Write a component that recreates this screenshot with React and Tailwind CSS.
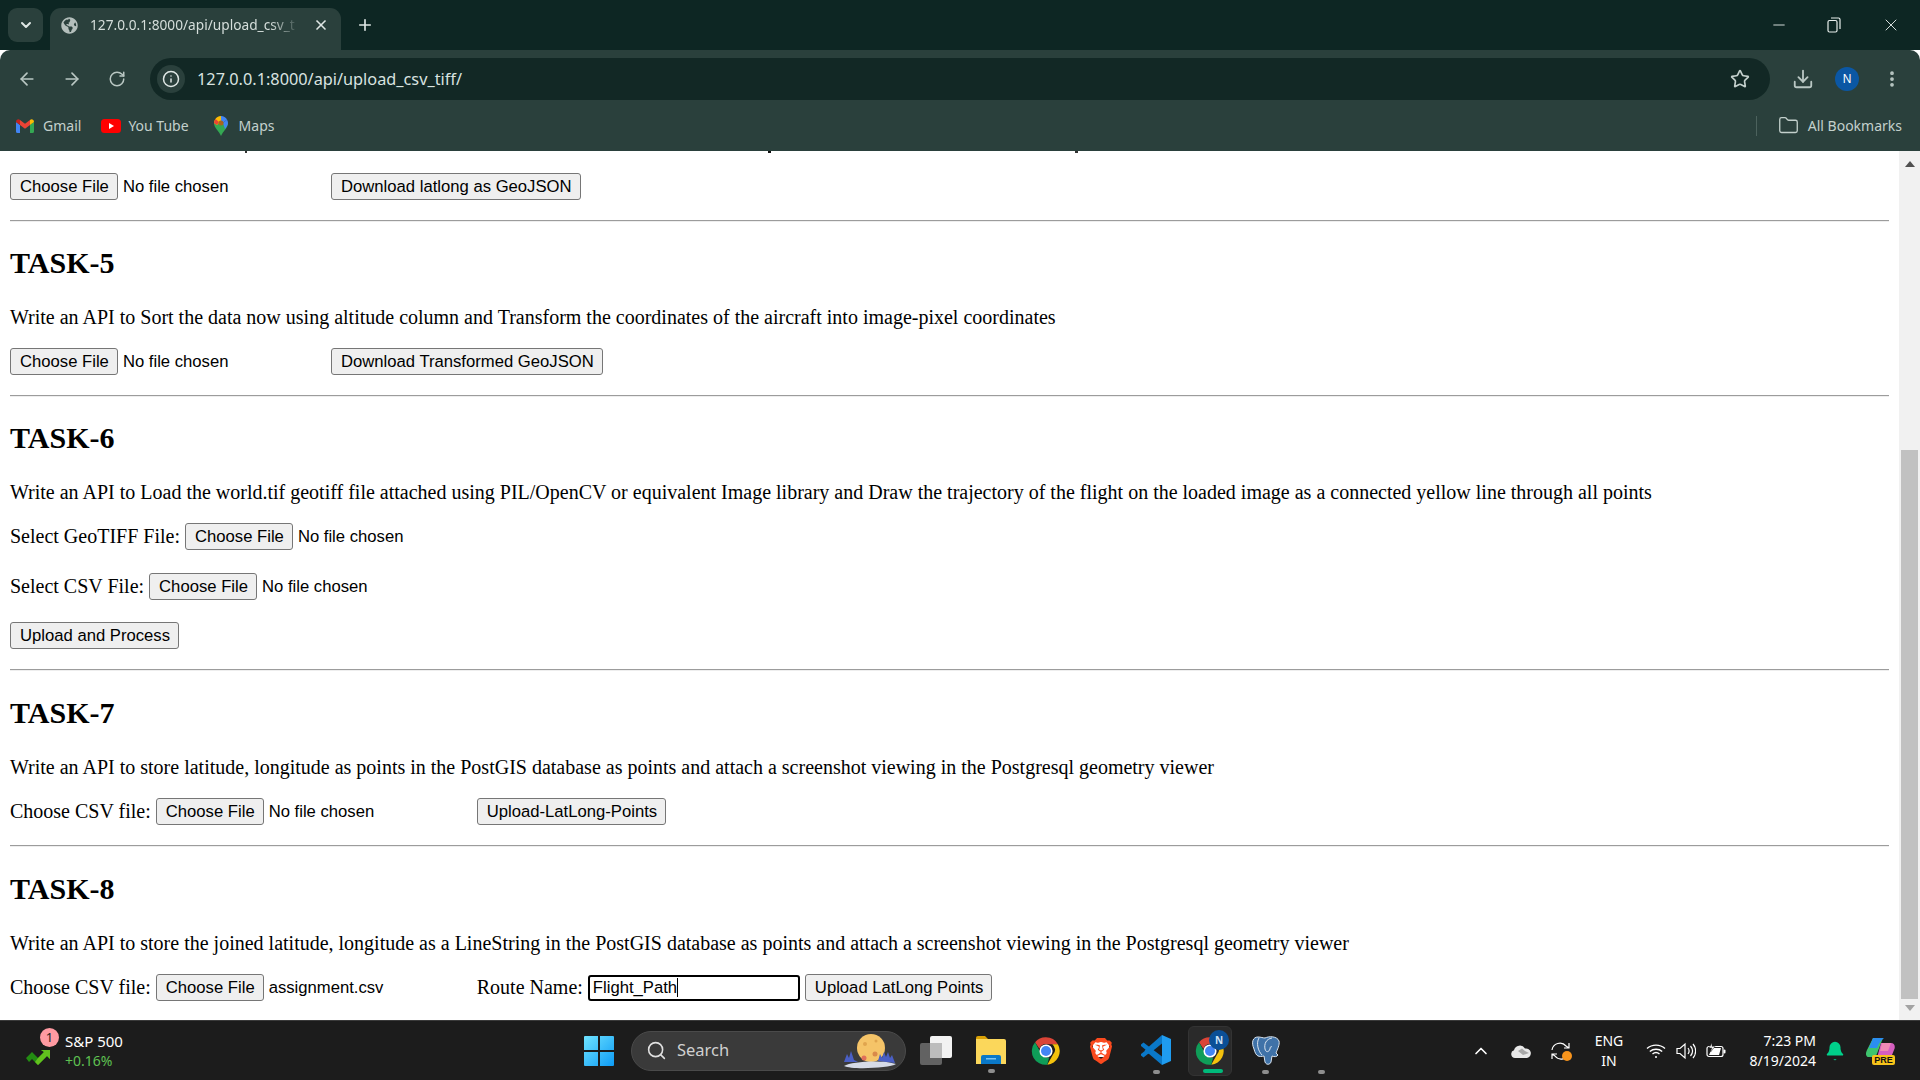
import React from 'react';
import { ArrowLeft, ArrowRight, RotateCw, Info, Star, Download, ChevronDown, ChevronUp, X, Plus, Minus, Folder, EllipsisVertical, Search, Bell } from 'lucide-react';
import { SiBrave } from 'react-icons/si';
import { FaGlobeAmericas } from 'react-icons/fa';

const uiFont = "font-['Noto_Sans','Open_Sans',sans-serif]";

const ChromeIcon = ({ size = 30 }) => (
  <svg width={size} height={size} viewBox="0 0 48 48">
    <path d="M24 2a22 22 0 0 1 19 11H24a11 11 0 0 0-10.5 7.5L6.500 10A22 22 0 0 1 24 2z" fill="#db4437" />
    <path d="M43 13a22 22 0 0 1-17 33l9-16a11 11 0 0 0-1-17z" fill="#f4c20d" />
    <path d="M6.500 10l9.500 18a11 11 0 0 0 13 6.500L26 46A22 22 0 0 1 6.500 10z" fill="#0f9d58" />
    <circle cx="24" cy="24" r="10.500" fill="#fff" />
    <circle cx="24" cy="24" r="8" fill="#4285f4" />
  </svg>
);

const GmailIcon = () => (
  <svg width="18" height="14" viewBox="0 0 18 14">
    <path d="M0 3v9.500A1.500 1.500 0 0 0 1.500 14H4V6z" fill="#4285f4" />
    <path d="M18 3v9.500a1.500 1.500 0 0 1-1.500 1.500H14V6z" fill="#34a853" />
    <path d="M4 6l5 3.800L14 6V1l-5 3.800L4 1z" fill="#ea4335" />
    <path d="M0 3c0-2.500 2.500-3.500 4-2v5z" fill="#c5221f" />
    <path d="M18 3c0-2.500-2.500-3.500-4-2v5z" fill="#fbbc04" />
  </svg>
);

const YoutubeIcon = () => (
  <svg width="20" height="14" viewBox="0 0 20 14">
    <rect width="20" height="14" rx="3.500" fill="#f00" />
    <path d="M8 4l5 3-5 3z" fill="#fff" />
  </svg>
);

const MapsIcon = () => (
  <svg width="14" height="20" viewBox="0 0 14 20">
    <path d="M7 20C5 15 0 12 0 7h14c0 5-5 8-7 13z" fill="#34a853" />
    <path d="M1 3.500A7 7 0 0 1 7 0v5L3 9 0 7a7 7 0 0 1 1-3.500z" fill="#fbbc04" />
    <path d="M7 0a7 7 0 0 1 6 3.500L9 7 7 5z" fill="#4285f4" />
    <path d="M13 3.500A7 7 0 0 1 14 7c0 2-1.500 4-3 6L9 7z" fill="#4285f4" />
    <path d="M1.500 3L5 6 3 9 0 7a7 7 0 0 1 1.500-4z" fill="#ea4335" />
    <circle cx="7" cy="7" r="2.500" fill="#a8651d" />
  </svg>
);

const WindowsLogo = () => (
  <svg width="30" height="30" viewBox="0 0 30 30">
    <defs>
      <linearGradient id="win" x1="0" y1="0" x2="1" y2="1">
        <stop offset="0" stopColor="#6fe3ff" />
        <stop offset="1" stopColor="#0d9bf5" />
      </linearGradient>
    </defs>
    <path d="M1 0h13v14H0V1a1 1 0 0 1 1-1zM16 0h13a1 1 0 0 1 1 1v13H16zM0 16h14v14H1a1 1 0 0 1-1-1zM16 16h14v13a1 1 0 0 1-1 1H16z" fill="url(#win)" />
  </svg>
);

const SearchMoon = () => (
  <svg width="60" height="40" viewBox="0 0 60 40">
    <circle cx="31" cy="17" r="14" fill="#f5c468" />
    <circle cx="25" cy="13" r="2" fill="#e0a54e" />
    <circle cx="36" cy="10" r="1.500" fill="#e0a54e" />
    <circle cx="35" cy="23" r="2.500" fill="#d98a4a" />
    <circle cx="24" cy="27" r="2.500" fill="#e0705a" />
    <path d="M4 31l3-8 2 4 2-7 3 9 4 2H4zM38 30l2-7 2 4 2-6 2 5 2-5 2 6 2-3 3 8z" fill="#4a5fc4" />
    <path d="M4 35c8-5 40-6 52-2-6 4-44 6-52 2z" fill="#d5dae6" />
  </svg>
);

const TaskView = () => (
  <svg width="32" height="32" viewBox="0 0 32 32">
    <rect x="10" y="1" width="22" height="22" rx="2" fill="#f2f2f2" />
    <rect x="0" y="8" width="22" height="22" rx="2" fill="#6e6e6e" fillOpacity="0.85" />
    <rect x="10" y="8" width="12" height="15" fill="#bcbcbc" />
  </svg>
);

const ExplorerIcon = () => (
  <svg width="30" height="28" viewBox="0 0 30 28">
    <path d="M0 2a2 2 0 0 1 2-2h7l3 3h-12z" fill="#d9a005" />
    <path d="M0 3h28a2 2 0 0 1 2 2v23H0z" fill="#fbd75b" />
    <path d="M5 21a2 2 0 0 1 2-2h16a2 2 0 0 1 2 2v7H5z" fill="#0a78c8" />
    <rect x="10" y="22" width="10" height="1.500" fill="#7cc4f2" />
  </svg>
);

const VscodeIcon = () => (
  <svg width="30" height="30" viewBox="0 0 30 30">
    <path d="M21 0l9 4v22l-9 4z" fill="#1f9cf0" />
    <path d="M21 0v8.500L8 19l-4.500-3.500z" fill="#0a78c8" />
    <path d="M21 30v-8.500L2.500 7.500 0 9.500V11l5 4-5 4v1.500l2.500 2 5-4z" fill="#0a78c8" />
  </svg>
);

const PostgresIcon = () => (
  <svg width="30" height="30" viewBox="0 0 30 30" fill="none" stroke="#dbe5ef" strokeWidth="1">
    <path d="M15 3c4-2 12-2 14 3 1 4-2 9-3 12l2 2c-1 2-4 2-6 1l-1 6c-1 3-5 3-6 0l-1-6c-5 1-8 1-10-7C1 7 3 2 8 2c3 0 5 1 7 1z" fill="#3f72a8" />
    <path d="M9 3c-3 5-1 13 3 17M22 3c-6 1-8 6-7 11 1 4 4 3 5 0 0-2 1-3 2-2" />
  </svg>
);

const StockIcon = () => (
  <svg width="28" height="20" viewBox="0 0 28 20">
    <path d="M0 13l6-6 6 6 6-6-3-2h9v9l-3-3-9 9-6-6-3 3z" fill="#238c12" />
    <path d="M12 13l6-6-3-2h9v9l-3-3-9 9-3-3z" fill="#62c01e" />
  </svg>
);

const CopilotIcon = () => (
  <div className="relative w-[29px] h-[28px]">
    <svg width="29" height="22" viewBox="0 0 29 22">
      <path d="M7 1h10l-5 13c-1 3-2 6-6 6H3C0 20-1 17 1 13z" fill="#3ec46d" />
      <path d="M7 1h11c-4 3-5 6-7 10L3 11z" fill="#2b8ef0" />
      <path d="M15 6h10c3 0 5 3 3 7l-2 5c-1 2-2 3-5 3H11z" fill="#d65fc0" />
      <path d="M16 6h9l-3 8h-8z" fill="#f08ab4" />
    </svg>
    <span className="absolute right-0 bottom-0 w-[23px] h-[10px] rounded-[2px] bg-[#f7c31a] text-[#111] text-[9px] leading-[10px] font-bold text-center font-['Liberation_Sans',sans-serif]">PRE</span>
  </div>
);

const WifiIcon = () => (
  <svg width="20" height="16" viewBox="0 0 20 16" fill="none" stroke="#fff" strokeWidth="1.400">
    <path d="M1 5.500c5-4.500 13-4.500 18 0M3.800 8.500c3.500-3 9-3 12.400 0M6.500 11c2-1.700 5-1.700 7 0" />
    <circle cx="10" cy="14" r="1" fill="#fff" stroke="none" />
  </svg>
);

const VolumeIcon = () => (
  <svg width="20" height="18" viewBox="0 0 20 18" fill="none" stroke="#fff" strokeWidth="1.200">
    <path d="M1 6.500h3L9 2v14l-5-4.500H1z" />
    <path d="M12 6c1.500 2 1.500 4 0 6M14.500 4c2.500 3 2.500 7 0 10M17 2c3.500 4 3.500 10 0 14" />
  </svg>
);

const BatteryIcon = () => (
  <svg width="20" height="16" viewBox="0 0 20 16" fill="none">
    <rect x="1" y="3.500" width="16" height="10" rx="2" stroke="#fff" strokeWidth="1.200" />
    <rect x="17.500" y="6.500" width="2" height="4" rx="1" fill="#fff" />
    <path d="M3 12l3-7h9l-2 7z" fill="#fff" />
    <path d="M6 0L3 5h3L4.500 9 9 3.500H6z" fill="#fff" stroke="#1c1c1c" strokeWidth="0.500" />
  </svg>
);

const SyncIcon = () => (
  <div className="relative w-[20px] h-[20px]">
    <svg width="20" height="20" viewBox="0 0 20 20" fill="none" stroke="#fff" strokeWidth="1.200">
      <path d="M1 9a8 8 0 0 1 14-4l3 2M18 2v5h-5" />
      <path d="M18 12a8 8 0 0 1-14 3l-3-2M1 18v-5h5" />
    </svg>
    <span className="absolute right-[-1px] bottom-0 w-[10px] h-[10px] rounded-full bg-[#f7941d]" />
  </div>
);

const CloudIcon = () => (
  <svg width="20" height="14" viewBox="0 0 20 14">
    <path d="M4 14a4 4 0 0 1-1-7.800A6 6 0 0 1 14 4.500 4.500 4.500 0 0 1 16 14z" fill="#e8e8e8" />
    <path d="M7 7l4-2.500 3 2.500 4 2-6 2z" fill="#a8a8a8" />
  </svg>
);

const Dot = ({ className = '' }) => <span className={`block w-[7px] h-[4px] rounded-full bg-[#8e8e8e] ${className}`} />;

const Button = ({ children, className = '' }) => (
  <button type="button" className={`h-[27px] pl-[9px] pr-[8px] shrink-0 bg-[#efefef] border border-[#767676] rounded-[3px] text-[16.67px] text-black whitespace-nowrap font-['Liberation_Sans',sans-serif] ${className}`}>
    {children}
  </button>
);

const FileField = ({ name = 'No file chosen', wide = true }) => (
  <div className={`flex items-center gap-[5px] shrink-0 ${wide ? 'w-[321px]' : ''}`}>
    <Button>Choose File</Button>
    <span className="text-[16.67px] text-black whitespace-nowrap font-['Liberation_Sans',sans-serif]">{name}</span>
  </div>
);

const Divider = () => <hr className="mt-[20px] border-0 border-t border-b border-t-[#9c9c9c] border-b-[#eeeeee] h-[2px]" />;

const Task = ({ title, text, headingClass = 'mt-[24px]', children }) => (
  <section>
    <Divider />
    <h2 className={`text-[30px] leading-[34px] font-bold mb-[26px] ${headingClass}`}>{title}</h2>
    <p className="text-[20px] leading-[23px]">{text}</p>
    {children}
  </section>
);

const Label = ({ children }) => <span className="text-[20px] leading-[23px] mr-[5px] whitespace-nowrap">{children}</span>;

function TabStrip() {
  return (
    <div className="h-[50px] bg-[#0d2623] flex items-end pl-[8px]">
      <div className="w-[35px] h-[34px] mb-[8px] rounded-[9px] bg-[#2a403c] flex items-center justify-center text-[#dfe7e5]">
        <ChevronDown size={16} strokeWidth={3} />
      </div>
      <div className="ml-[7px] w-[291px] h-[42px] rounded-t-[11px] bg-[#2a403c] flex items-center pl-[11px] pr-[12px] pb-[8px]">
        <FaGlobeAmericas size={17} className="text-[#b4bfbc] shrink-0" />
        <span className={`ml-[12px] w-[212px] whitespace-nowrap text-[13.7px] text-[#d5dedb] [mask-image:linear-gradient(to_right,black_85%,transparent_99%)] ${uiFont}`}>127.0.0.1:8000/api/upload_csv_t</span>
        <X size={16} strokeWidth={2.500} className="ml-auto text-[#dfe7e5]" />
      </div>
      <div className="ml-[15px] h-[42px] pb-[8px] flex items-center text-[#dfe7e5]">
        <Plus size={18} strokeWidth={2.200} />
      </div>
      <div className="ml-auto h-[50px] flex items-center pb-[1px] pr-[19px] text-[#e8eeec]">
        <Minus size={18} strokeWidth={1.200} />
        <svg className="ml-[39px]" width="14" height="16" viewBox="0 0 14 16" fill="none" stroke="#e8eeec" strokeWidth="1.200">
          <rect x="1" y="3.500" width="9" height="11.500" rx="1.500" />
          <path d="M4 1h7.500A1.500 1.500 0 0 1 13 2.500V12" />
        </svg>
        <X size={20} strokeWidth={1.100} className="ml-[40px]" />
      </div>
    </div>
  );
}

function Toolbar() {
  return (
    <div className="h-[50px] pt-[8px] bg-[#2a403c] rounded-t-[10px] flex items-center pl-[17px] pr-[17px] text-[#b9c7c3]">
      <ArrowLeft size={20} strokeWidth={2} />
      <ArrowRight size={20} strokeWidth={2} className="ml-[25px]" />
      <RotateCw size={18} strokeWidth={2} className="ml-[26px]" />
      <div className="ml-[24px] w-[1620px] h-[42px] rounded-full bg-[#122825] flex items-center pl-[7px] pr-[20px]">
        <div className="w-[28px] h-[28px] rounded-full bg-[#2a403c] flex items-center justify-center text-[#dfe7e5]">
          <Info size={18} strokeWidth={2} />
        </div>
        <span className={`ml-[12px] text-[16.3px] text-[#d9e3e0] ${uiFont}`}>127.0.0.1:8000/api/upload_csv_tiff/</span>
        <Star size={20} strokeWidth={2} className="ml-auto text-[#c4d0cd]" />
      </div>
      <Download size={22} strokeWidth={2} className="ml-[22px]" />
      <div className="ml-[21px] w-[24px] h-[24px] rounded-full bg-[#0b57a4] text-white text-[12px] flex items-center justify-center font-['Liberation_Sans',sans-serif]">N</div>
      <EllipsisVertical size={20} strokeWidth={2.500} className="ml-[23px]" />
    </div>
  );
}

function BookmarksBar() {
  return (
    <div className={`h-[51px] bg-[#2a403c] flex items-center pl-[16px] pr-[18px] text-[14px] text-[#c3d0cc] ${uiFont}`}>
      <GmailIcon />
      <span className="ml-[9px]">Gmail</span>
      <span className="ml-[20px]"><YoutubeIcon /></span>
      <span className="ml-[7px]">You Tube</span>
      <span className="ml-[25px] flex"><MapsIcon /></span>
      <span className="ml-[11px]">Maps</span>
      <div className="ml-auto w-[1px] h-[20px] bg-[#4c625d]" />
      <Folder size={21} strokeWidth={1.500} className="ml-[21px]" />
      <span className="ml-[9px]">All Bookmarks</span>
    </div>
  );
}

function Scrollbar() {
  return (
    <div className="w-[21px] bg-[#f1f1f1] flex flex-col items-center shrink-0">
      <svg className="mt-[10px]" width="10" height="6" viewBox="0 0 10 6"><path d="M5 0l5 6H0z" fill="#505050" /></svg>
      <div className="mt-[283px] w-[17px] h-[549px] bg-[#c1c1c1]" />
      <svg className="mt-[6px]" width="10" height="6" viewBox="0 0 10 6"><path d="M5 6l5-6H0z" fill="#a3a3a3" /></svg>
    </div>
  );
}

function Page() {
  return (
    <div className="flex-1 min-w-0 overflow-hidden bg-white text-black px-[10px] font-['Liberation_Serif',serif]">
      {/* bottom edge of the line that is scrolled away */}
      <div className="h-[2px] flex">
        <span className="ml-[235px] w-[2px] bg-[#333]" />
        <span className="ml-[521px] w-[3px] bg-[#111]" />
        <span className="ml-[304px] w-[3px] bg-[#333]" />
      </div>
      <div className="flex items-center mt-[20px] h-[27px]">
        <FileField />
        <Button>Download latlong as GeoJSON</Button>
      </div>

      <Task
        title="TASK-5"
        text="Write an API to Sort the data now using altitude column and Transform the coordinates of the aircraft into image-pixel coordinates"
      >
        <div className="flex items-center mt-[19px] h-[27px]">
          <FileField />
          <Button>Download Transformed GeoJSON</Button>
        </div>
      </Task>

      <Task
        title="TASK-6"
        text="Write an API to Load the world.tif geotiff file attached using PIL/OpenCV or equivalent Image library and Draw the trajectory of the flight on the loaded image as a connected yellow line through all points"
      >
        <div className="flex items-center mt-[19px] h-[27px]">
          <Label>Select GeoTIFF File:</Label>
          <FileField wide={false} />
        </div>
        <div className="flex items-center mt-[23px] h-[27px]">
          <Label>Select CSV File:</Label>
          <FileField wide={false} />
        </div>
        <div className="flex items-center mt-[22px] h-[27px]">
          <Button>Upload and Process</Button>
        </div>
      </Task>

      <Task
        title="TASK-7"
        headingClass="mt-[25px]"
        text="Write an API to store latitude, longitude as points in the PostGIS database as points and attach a screenshot viewing in the Postgresql geometry viewer"
      >
        <div className="flex items-center mt-[19px] h-[27px]">
          <Label>Choose CSV file:</Label>
          <FileField />
          <Button>Upload-LatLong-Points</Button>
        </div>
      </Task>

      <Task
        title="TASK-8"
        headingClass="mt-[25px]"
        text="Write an API to store the joined latitude, longitude as a LineString in the PostGIS database as points and attach a screenshot viewing in the Postgresql geometry viewer"
      >
        <div className="flex items-center mt-[19px] h-[27px]">
          <Label>Choose CSV file:</Label>
          <FileField name="assignment.csv" />
          <Label>Route Name:</Label>
          <div className="w-[212px] h-[26px] border-2 border-black rounded-[3px] flex items-center pl-[3px] text-[16.67px] font-['Liberation_Sans',sans-serif]">
            <span>Flight_Path</span>
            <span className="w-[1px] h-[19px] bg-black" />
          </div>
          <Button className="ml-[5px]">Upload LatLong Points</Button>
        </div>
      </Task>
    </div>
  );
}

function Taskbar() {
  return (
    <div className={`h-[60px] shrink-0 bg-[#1c1c1c] border-t border-[#3a3a3a] flex items-center text-white ${uiFont}`}>
      <div className="w-[584px] shrink-0 flex items-center pl-[26px]">
        <div className="relative mt-[8px]">
          <StockIcon />
          <span className="absolute left-[14px] top-[-17px] w-[19px] h-[19px] rounded-full bg-[#ff9aa2] text-[#222] text-[13px] leading-[19px] text-center">1</span>
        </div>
        <div className="ml-[11px] flex flex-col text-[14px] leading-[20px]">
          <span className="text-[15px]">S&amp;P 500</span>
          <span className="text-[#5fc152]">+0.16%</span>
        </div>
      </div>
      <WindowsLogo />
      <div className="ml-[17px] w-[275px] h-[40px] rounded-full bg-[#3a3a3a] border border-[#4a4a4a] flex items-center pl-[14px]">
        <Search size={21} strokeWidth={1.800} className="text-[#e0e0e0]" />
        <span className="ml-[10px] text-[16.500px] text-[#d0d0d0]">Search</span>
        <span className="ml-auto mr-[5px] flex"><SearchMoon /></span>
      </div>
      <span className="ml-[14px] flex"><TaskView /></span>
      <div className="ml-[24px] w-[30px] flex flex-col items-center mt-[7px]">
        <ExplorerIcon />
        <Dot className="mt-[5px]" />
      </div>
      <span className="ml-[25px] flex"><ChromeIcon /></span>
      <span className="ml-[27px] relative flex w-[26px] h-[32px] items-center justify-center">
        <span className="absolute left-[5px] top-[6px] w-[16px] h-[16px] bg-white" />
        <SiBrave size={30} className="relative text-[#fb4a1e]" />
      </span>
      <div className="ml-[27px] w-[30px] flex flex-col items-center mt-[7px]">
        <VscodeIcon />
        <Dot className="mt-[5px]" />
      </div>
      <div className="ml-[17px] w-[44px] h-[50px] rounded-[6px] bg-[#2a2a2a] border border-[#333] relative flex items-center justify-center">
        <ChromeIcon size={30} />
        <span className="absolute right-[2px] top-[3px] w-[20px] h-[20px] rounded-full bg-[#0b4f96] text-[#cfe2f5] text-[10px] leading-[20px] text-center font-bold">N</span>
        <span className="absolute bottom-[2px] left-[14px] w-[20px] h-[4px] rounded-full bg-[#00b97a]" />
      </div>
      <div className="ml-[18px] w-[30px] flex flex-col items-center mt-[7px]">
        <PostgresIcon />
        <Dot className="mt-[5px]" />
      </div>
      <Dot className="ml-[38px] mt-[42px]" />

      <div className="ml-auto flex items-center pr-[25px]">
        <ChevronUp size={20} strokeWidth={2} />
        <span className="ml-[20px] flex"><CloudIcon /></span>
        <span className="ml-[20px] flex"><SyncIcon /></span>
        <div className="ml-[24px] w-[28px] flex flex-col items-center text-[14px] leading-[20px]">
          <span>ENG</span>
          <span>IN</span>
        </div>
        <span className="ml-[23px] flex"><WifiIcon /></span>
        <span className="ml-[10px] flex"><VolumeIcon /></span>
        <span className="ml-[10px] flex"><BatteryIcon /></span>
        <div className="ml-[15px] w-[75px] flex flex-col items-end text-[14px] leading-[20px]">
          <span>7:23 PM</span>
          <span>8/19/2024</span>
        </div>
        <Bell size={22} fill="#00d08a" strokeWidth={0} className="ml-[8px]" />
        <span className="ml-[20px] flex"><CopilotIcon /></span>
      </div>
    </div>
  );
}

export default function App() {
  return (
    <div className="w-[1920px] h-[1080px] flex flex-col overflow-hidden">
      <TabStrip />
      <Toolbar />
      <BookmarksBar />
      <div className="flex-1 min-h-0 flex">
        <Page />
        <Scrollbar />
      </div>
      <Taskbar />
    </div>
  );
}
